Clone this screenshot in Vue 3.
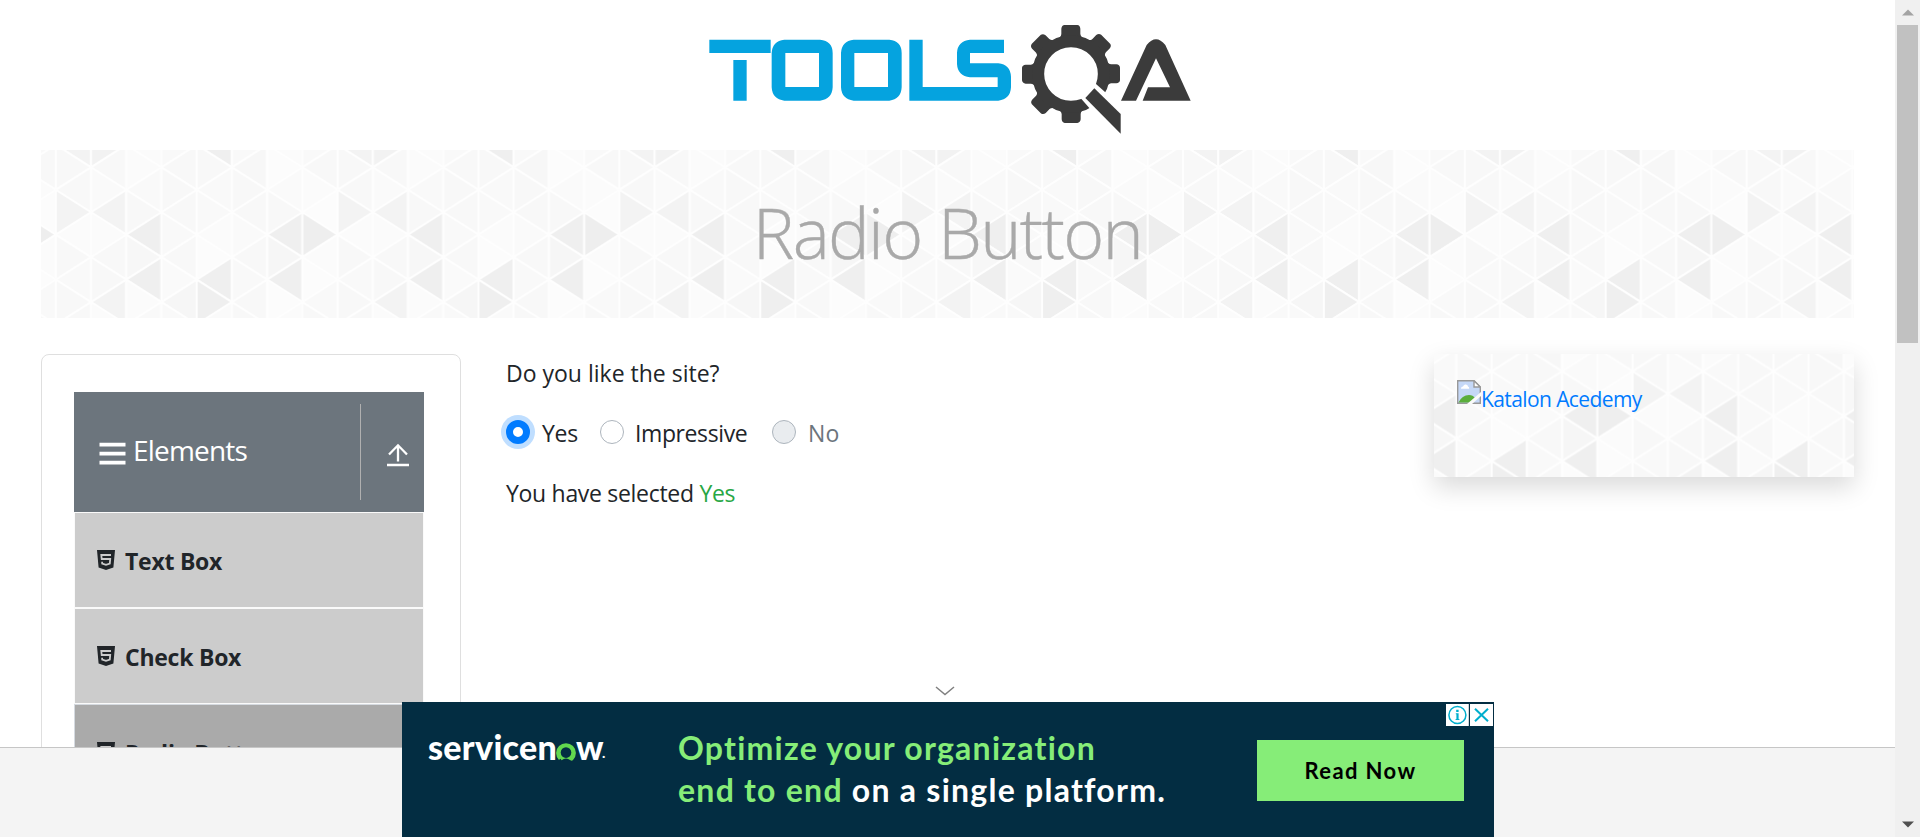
<script setup>
const W = 35.225
const H = 22.45
// Shades per column, rows from k = -1 to k = 7
const shades = [
  ['f3', 'f8', 'f8', 'f3', 'fb', 'f8', 'f9', 'f8', 'f8'],
  ['f2', 'f8', 'fa', 'f3', 'fb', 'f8', 'f8', 'f3', 'fb'],
  ['fb', 'fb', 'f9', 'f8', 'ef', 'f7', 'ef', 'fb', 'f9'],
  ['f9', 'f8', 'f8', 'f8', 'f9', 'f8', 'fa', 'f6', 'f9'],
  ['ef', 'f8', 'f9', 'f9', 'fb', 'fc', 'ef', 'ef', 'fa'],
  ['f9', 'f7', 'f8', 'f8', 'fa', 'f8', 'f9', 'f8', 'f8'],
  ['fb', 'fc', 'fa', 'f8', 'ef', 'f6', 'ef', 'fc', 'fb'],
  ['f9', 'f8', 'fb', 'fc', 'ee', 'fb', 'fc', 'f9', 'f8'],
]
const triangles = []
shades.forEach((col, c) => {
  col.forEach((s, i) => {
    const k = i - 1
    const y = (k + 3) * H
    const right = (((k - c) % 2) + 2) % 2 === 0
    const x0 = c * W
    const x1 = x0 + W
    triangles.push({
      points: right
        ? `${x0},${y - H} ${x1},${y} ${x0},${y + H}`
        : `${x1},${y - H} ${x0},${y} ${x1},${y + H}`,
      fill: `#${s}${s}${s}`,
    })
  })
})
const teeth = [0, 45, 90, 180, 225, 270, 315]
const items = [
  { label: 'Text Box', active: false },
  { label: 'Check Box', active: false },
  { label: 'Radio Button', active: true },
]
</script>

<template>
  <div class="window">
    <svg class="defs" width="0" height="0">
      <defs>
        <pattern id="tri-banner" patternUnits="userSpaceOnUse" x="14.8" y="-50" :width="W * 8" height="300">
          <polygon v-for="(t, i) in triangles" :key="i" :points="t.points" :fill="t.fill" stroke="#fefefe" stroke-width="2" stroke-linejoin="round" />
        </pattern>
        <pattern id="tri-card" patternUnits="userSpaceOnUse" x="-83.2" y="-72.5" :width="W * 8" height="300">
          <polygon v-for="(t, i) in triangles" :key="i" :points="t.points" :fill="t.fill" stroke="#fefefe" stroke-width="2" stroke-linejoin="round" />
        </pattern>
      </defs>
    </svg>

    <main class="page">
      <header class="logo">
        <svg width="520" height="135" viewBox="0 0 1560 405">
          <g fill="#05a3df">
            <path d="M58 89H242V129H58zM130 150H170V272H130z" />
            <path fill-rule="evenodd" d="M283 89H390Q428 93 428 129V232Q426 268 390 272H283Q247 268 245 232V129Q247 93 283 89zM286 129V231H387V129z" />
            <path fill-rule="evenodd" d="M491 89H598Q635 93 635 129V232Q633 268 598 272H491Q455 268 453 232V129Q455 93 491 89zM493 129V231H594V129z" />
            <path d="M942 89V129H840V160H925Q961 164 963 200V232Q961 268 925 272H658V89H698V231H923V202H840Q803 198 801 162V128Q803 93 840 89z" />
          </g>
          <g fill="#3b3b3b">
            <path v-for="a in teeth" :key="a" :transform="`rotate(${a} 1143 192)`" d="M1090 92Q1114 84 1114 72V56Q1115 46 1124 45H1162Q1170 46 1171 56V72Q1172 84 1196 92z" />
            <circle cx="1143" cy="192" r="98.5" fill="none" stroke="#3b3b3b" stroke-width="36" />
            <path d="M1218 222L1196 204L1160 250L1175 268L1240 342L1310 380V304z" fill="#fff" />
            <path d="M1213 235L1292 312V371L1186 264z" />
            <path d="M1293 272L1370 105Q1398 70 1426 105L1502 272H1358L1374 232H1440L1398 145L1338 272z" />
          </g>
        </svg>
      </header>

      <section class="banner">
        <svg class="texture"><rect width="100%" height="100%" fill="url(#tri-banner)" /></svg>
        <h1>Radio Button</h1>
      </section>

      <div class="columns">
        <aside class="sidebar">
          <div class="group">
            <svg class="bars" width="27" height="24" viewBox="0 0 27 24"><path d="M.5 2.7H26.5M.5 11.7H26.5M.5 20.7H26.5" stroke="#fff" stroke-width="3.7" /></svg>
            <span class="group-name">Elements</span>
            <span class="toggle">
              <svg width="22" height="24" viewBox="0 0 22 24" fill="none" stroke="#fff" stroke-width="2.3"><path d="M11 2V18.5M2 11.5L11 2.3L20 11.5M0 22H22" /></svg>
            </span>
          </div>
          <ul class="items">
            <li v-for="it in items" :key="it.label" :class="{ active: it.active }">
              <svg width="18" height="20" viewBox="0 0 18 20">
                <path d="M0 0H18L16.4 17.4L9 20L1.6 17.4z" fill="#212529" />
                <path d="M14 5H4.3L4.7 9H13.2L12.8 13.6L9 14.9L5.2 13.6L5.1 11.8" fill="none" stroke="#ccc" stroke-width="1.8" />
              </svg>
              <span>{{ it.label }}</span>
            </li>
          </ul>
        </aside>

        <section class="content">
          <p class="question">Do you like the site?</p>
          <div class="radios">
            <label class="radio checked"><i></i><span>Yes</span></label>
            <label class="radio second"><i></i><span>Impressive</span></label>
            <label class="radio disabled"><i></i><span>No</span></label>
          </div>
          <p class="result">You have selected <span class="green">Yes</span></p>
        </section>

        <aside class="promo">
          <svg class="texture"><rect width="100%" height="100%" fill="url(#tri-card)" /></svg>
          <a class="promo-link">
            <svg width="24" height="24" viewBox="0 0 24 24">
              <path d="M.7 .7H17L23.3 7V23.3H.7z" fill="#c5d8f7" stroke="#999" stroke-width="1.4" />
              <path d="M4 8.5Q4 6.5 6 6.5Q7 4 9 4.5Q11 5 11 6.5Q12.5 7 12.2 8.7H4z" fill="#fff" />
              <path d="M1.5 22.5Q5 15 12 15Q16 15 18 18L13 22.5z" fill="#5bae3c" />
              <path d="M24 12V16L15 24H10z" fill="#fbfbfb" />
              <path d="M17 .7V7H23.3z" fill="#fff" stroke="#999" stroke-width="1.4" />
            </svg>
            <span>Katalon Acedemy</span>
          </a>
        </aside>
      </div>

      <footer class="footer"></footer>
    </main>

    <div class="scrollbar">
      <svg class="arrow" width="12" height="7" viewBox="0 0 12 7"><path d="M0 6.5L6 .5L12 6.5z" fill="#a3a3a3" /></svg>
      <div class="thumb"></div>
      <svg class="arrow down" width="12" height="7" viewBox="0 0 12 7"><path d="M0 .5H12L6 6.5z" fill="#505050" /></svg>
    </div>

    <svg class="collapse" width="20" height="10" viewBox="0 0 20 10"><path d="M1 1L10 8.5L19 1" fill="none" stroke="#808080" stroke-width="1.5" /></svg>

    <div class="ad">
      <div class="brand">
        <span class="brand-a">servicen</span>
        <svg width="20" height="19" viewBox="0 0 20 19"><path d="M4.4 16.6A7.9 7.9 0 1 1 15.6 16.6Q10 12.4 4.4 16.6" fill="#62d84e" stroke="#62d84e" stroke-width="4" stroke-linejoin="round" /><circle cx="10" cy="10.6" r="5.3" fill="#032d42" /><path d="M6.5 19Q10 16.4 13.5 19z" fill="#032d42" /></svg>
        <span class="brand-b">w</span><span class="brand-dot">.</span>
      </div>
      <p class="slogan"><span class="line one">Optimize your organization</span><span class="line two"><em>end to end</em> on a single platform.</span></p>
      <div class="cta">Read Now</div>
      <div class="badges">
        <svg width="23" height="22" viewBox="0 0 23 22"><rect width="22.8" height="22" fill="#fff" /><circle cx="11.4" cy="11" r="8.5" fill="none" stroke="#00aecd" stroke-width="1.5" /><path d="M10.2 5.7H12.6V8H10.2zM9.8 9.3H12.6V15H13.4V16H9.6V15H10.4V10.2H9.8z" fill="#00aecd" /></svg>
        <svg width="23" height="22" viewBox="0 0 23 22"><rect width="23" height="22" fill="#fff" /><path d="M5 4.7L18 17.3M18 4.7L5 17.3" stroke="#00aecd" stroke-width="2" /></svg>
      </div>
    </div>
  </div>
</template>

<style>
body {
  margin: 0;
  background: #fff;
  overflow: hidden;
}
</style>

<style scoped>
.window {
  position: relative;
  display: flex;
  width: 1920px;
  height: 837px;
  overflow: hidden;
  font-family: "Open Sans", "Noto Sans", sans-serif;
  font-size: 23px;
  color: #212529;
  background: #fff;
}
svg {
  display: block;
  flex: none;
}
.defs {
  position: absolute;
}
.page {
  position: relative;
  width: 1895px;
  height: 837px;
  overflow: hidden;
}
.logo {
  box-sizing: border-box;
  height: 150px;
  padding: 10px 0 0 5px;
  display: flex;
  justify-content: center;
}
.banner {
  position: relative;
  width: 1813px;
  height: 168px;
  margin-left: 41px;
}
.texture {
  position: absolute;
  inset: 0;
  width: 100%;
  height: 100%;
}
h1 {
  position: relative;
  margin: 0;
  text-align: center;
  font-weight: 300;
  font-size: 70px;
  line-height: 164px;
  height: 168px;
  letter-spacing: -1.7px;
  color: #a9a9a9;
  -webkit-text-stroke: 0.4px #a9a9a9;
}
.columns {
  display: flex;
  align-items: flex-start;
  padding: 36px 0 0 41px;
}
.sidebar {
  box-sizing: border-box;
  width: 420px;
  height: 600px;
  border: 1px solid #dfdfdf;
  border-radius: 8px;
  padding: 37px 36px 0 32px;
}
.group {
  display: flex;
  align-items: center;
  width: 350px;
  height: 120px;
  background: #6c757d;
  color: #fff;
}
.bars {
  margin: 3px 0 0 25px;
}
.group-name {
  margin: -5px 0 0 7px;
  font-size: 28px;
  letter-spacing: -0.8px;
  line-height: 40px;
  flex: 1;
}
.toggle {
  box-sizing: border-box;
  width: 64px;
  height: 96px;
  border-left: 1px solid #b0b0b0;
  padding: 39px 0 0 26px;
}
.items {
  list-style: none;
  margin: 0;
  padding: 0;
  width: 350px;
}
.items li {
  box-sizing: border-box;
  height: 96px;
  border: 1px solid #fafafa;
  background: #ccc;
  display: flex;
  align-items: center;
  padding: 2px 0 0 22px;
  font-weight: 700;
  letter-spacing: -0.25px;
}
.items li svg {
  margin: -3px 10px 0 0;
}
.items li.active {
  background: #aaa;
  border-color: #d5dae0;
}
.content {
  width: 928px;
  padding-left: 45px;
  box-sizing: content-box;
}
.content p {
  margin: 0;
  line-height: 38px;
  height: 40px;
}
.radios {
  display: flex;
  height: 40px;
  margin: 19px 0 21px;
  line-height: 40px;
}
.result {
  letter-spacing: -0.3px;
}
.radio {
  display: flex;
  align-items: center;
  letter-spacing: -0.3px;
}
.radio i {
  box-sizing: border-box;
  width: 24px;
  height: 24px;
  border: 1px solid #adb5bd;
  border-radius: 50%;
  margin-top: -2px;
  margin-right: 12px;
  background: #fff;
}
.radio.checked {
  width: 94px;
}
.radio.second {
  width: 172px;
  letter-spacing: -0.4px;
}
.radio.second i {
  margin-right: 11px;
}
.radio.checked i {
  border: 7px solid #007bff;
  box-shadow: 0 0 0 5px #bfdeff;
}
.radio.disabled i {
  background: #e9ecef;
}
.radio.disabled {
  color: #6c757d;
  letter-spacing: 0.2px;
}
.green {
  color: #28a745;
}
.promo {
  position: relative;
  width: 420px;
  height: 123px;
  box-shadow: 0 10px 24px rgba(0, 0, 0, 0.15);
}
.promo-link {
  position: relative;
  display: flex;
  padding: 26px 0 0 23px;
  font-size: 21px;
  letter-spacing: -0.6px;
  line-height: 38px;
  color: #007bff;
}
.footer {
  position: absolute;
  left: 0;
  right: 0;
  bottom: 0;
  height: 89px;
  border-top: 1px solid #c6c6c6;
  background: #f4f4f4;
}
.scrollbar {
  width: 25px;
  height: 837px;
  background: #f0f0f0;
  display: flex;
  flex-direction: column;
  align-items: center;
}
.arrow {
  margin-top: 9px;
}
.thumb {
  width: 21px;
  height: 318px;
  margin-top: 9px;
  background: #c1c1c1;
}
.arrow.down {
  margin-top: auto;
  margin-bottom: 9px;
}
.collapse {
  position: absolute;
  left: 935px;
  top: 686px;
}
.ad {
  position: absolute;
  left: 402px;
  top: 702px;
  width: 1092px;
  height: 135px;
  background: #032d42;
  color: #fff;
  font-family: Lato, sans-serif;
  font-weight: 700;
  display: flex;
  align-items: flex-start;
}
.brand {
  display: flex;
  width: 251px;
  padding: 25px 0 0 26px;
  box-sizing: border-box;
  font-size: 34px;
  line-height: 40px;
  font-weight: 900;
}
.brand svg {
  margin-top: 15px;
}
.brand-a {
  width: 128px;
  letter-spacing: 0.3px;
}
.brand-b {
  width: 26px;
}
.brand-dot {
  font-size: 14px;
  line-height: 52px;
}
.slogan {
  margin: 25px 0 0 25px;
  width: 579px;
  font-size: 32px;
  line-height: 42px;
  letter-spacing: 1.25px;
  white-space: nowrap;
}
.line {
  display: block;
}
.one,
em {
  font-style: normal;
  color: #86ed78;
}
.cta {
  width: 207px;
  height: 61px;
  margin-top: 38px;
  background: #86ed78;
  color: #000;
  text-align: center;
  font-size: 22px;
  line-height: 62px;
  letter-spacing: 1.4px;
}
.badges {
  position: absolute;
  right: 1px;
  top: 2px;
  display: flex;
  gap: 1px;
}
</style>
